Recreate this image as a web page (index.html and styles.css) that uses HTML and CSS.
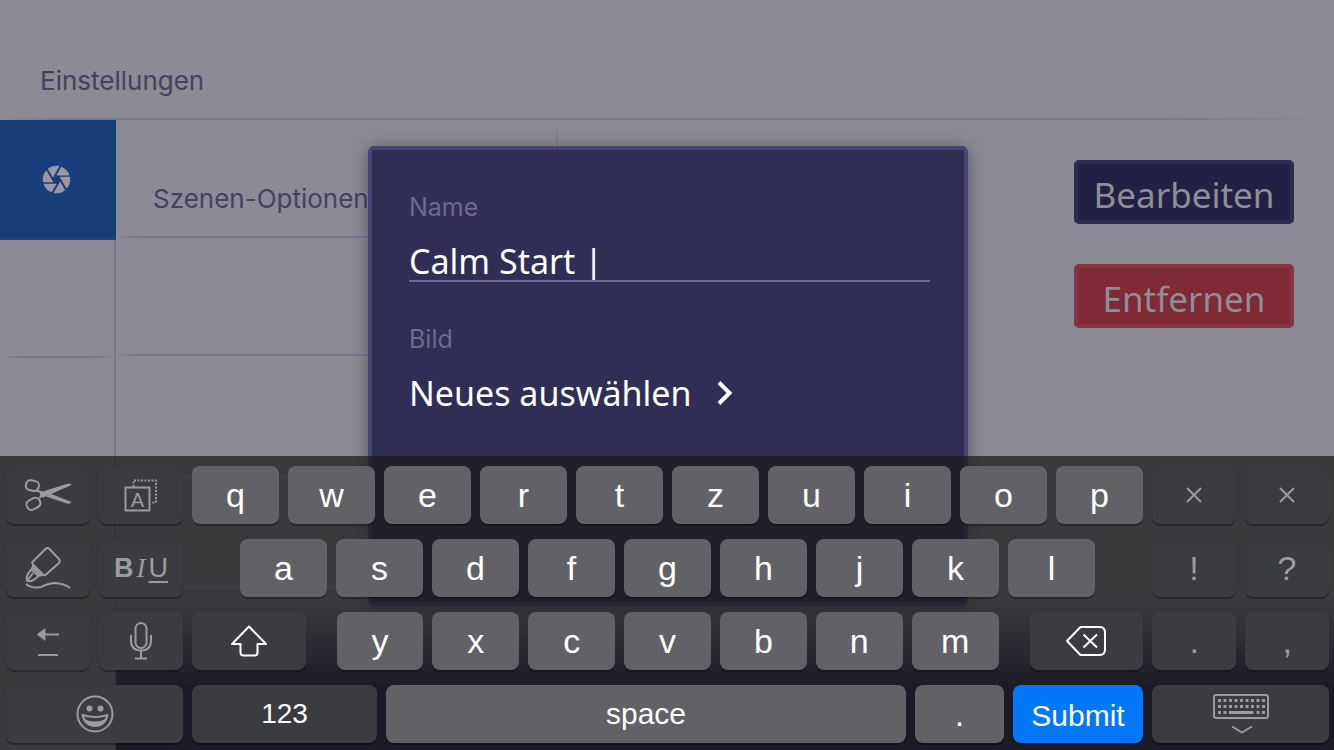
FILE: index.html
```html
<!DOCTYPE html>
<html lang="de">
<head>
<meta charset="utf-8">
<meta name="viewport" content="width=device-width, initial-scale=1">
<title>Einstellungen</title>
<link rel="stylesheet" href="styles.css">
</head>
<body>
<div class="screen">
  <header class="header"><h1 class="title">Einstellungen</h1></header>
  <main class="body">
    <nav class="sidebar" aria-label="Bereiche">
      <a class="tab tab-active" href="#szenen" aria-label="Szenen">
        <svg class="aperture" viewBox="0 0 24 24" aria-hidden="true"><path d="M9.4 10.5l4.77-8.26C13.47 2.09 12.75 2 12 2c-2.4 0-4.6.85-6.32 2.25l3.66 6.35.06-.1zM21.54 9c-.92-2.92-3.15-5.26-6-6.34L11.88 9h9.66zm.26 1h-7.49l.29.5 4.76 8.25C21 16.97 22 14.61 22 12c0-.69-.07-1.35-.2-2zM8.54 12l-3.9-6.75C3.01 7.03 2 9.39 2 12c0 .69.07 1.35.2 2h7.49l-1.15-2zm-6.08 3c.92 2.92 3.15 5.26 6 6.34L12.12 15H2.46zm11.27 0l-3.9 6.76c.7.15 1.42.24 2.17.24 2.4 0 4.6-.85 6.32-2.25l-3.66-6.35-.93 1.6z"/></svg>
      </a>
      <div class="tab"></div>
      <div class="tab"></div>
    </nav>
    <section class="list">
      <h2 class="row row-title">Szenen-Optionen</h2>
      <div class="row"></div>
      <div class="row"></div>
      <div class="row"></div>
    </section>
    <section class="actions">
      <button class="action action-edit" type="button">Bearbeiten</button>
      <button class="action action-remove" type="button">Entfernen</button>
    </section>
  </main>

  <form class="dialog" role="dialog" aria-label="Szene bearbeiten">
    <label class="label" for="name">Name</label>
    <input class="name-input" id="name" type="text" value="Calm Start |">
    <span class="label" id="bild">Bild</span>
    <button class="picker" type="button" aria-describedby="bild">Neues auswählen
      <svg class="chevron" viewBox="0 0 16 26" aria-hidden="true"><path d="M2 2.500L12.500 13L2 23.500"/></svg>
    </button>
  </form>

  <div class="keyboard" role="group" aria-label="Tastatur">
    <div class="keys">
      <button class="key dark side" type="button" aria-label="Ausschneiden">
        <svg class="ico" width="48" height="32" viewBox="0 0 48 32" aria-hidden="true"><g class="line"><rect x="2" y="1.500" width="13" height="10" rx="4.500" transform="rotate(12 8 6)"/><rect x="2.500" y="20" width="14" height="10" rx="4.500" transform="rotate(-28 9 25)"/><path d="M12 11.500l7 2M15 19l3-2"/></g><path class="solid" d="M16 13.500L44 4.500Q47 4 47.500 6L19 18.500L16 17zM22 17.500L27 15L47.500 23Q46 25.500 43 24.500z"/></svg>
      </button>
      <button class="key dark side" type="button" aria-label="Alles auswählen">
        <svg class="ico" width="34" height="34" viewBox="0 0 34 34" aria-hidden="true"><g class="line"><rect x="1.500" y="9.500" width="24" height="23"/><path stroke-dasharray="2 1.500" d="M9.500 9V2.500H32V24.500H27"/></g><text class="ico-text" x="13.500" y="28.500">A</text></svg>
      </button>
      <button class="key" type="button">q</button><button class="key" type="button">w</button><button class="key" type="button">e</button><button class="key" type="button">r</button><button class="key" type="button">t</button><button class="key" type="button">z</button><button class="key" type="button">u</button><button class="key" type="button">i</button><button class="key" type="button">o</button><button class="key" type="button">p</button>
      <button class="key dark side" type="button" aria-label="Leer"><svg class="ico" width="16" height="16" viewBox="0 0 16 16" aria-hidden="true"><path class="line" d="M1 1l14 14M15 1L1 15"/></svg></button>
      <button class="key dark side" type="button" aria-label="Leer"><svg class="ico" width="16" height="16" viewBox="0 0 16 16" aria-hidden="true"><path class="line" d="M1 1l14 14M15 1L1 15"/></svg></button>
    </div>
    <div class="keys">
      <button class="key dark side" type="button" aria-label="Markieren">
        <svg class="ico" width="46" height="44" viewBox="0 0 46 44" aria-hidden="true"><g class="line"><path d="M8 18.500Q6.500 17 8 15.500L20.500 3Q22.500 1 24.500 3L34 13Q35.500 15 34 17L21 28.500Q19.500 30 18 28.500zM8.500 18.500L6.500 23.500L13.500 30L18 28.500M7.500 21L16 29.500"/><path d="M6.500 23.500Q0 30 2 35Q7 36.500 13.500 30M2 35L8 27M1 38Q7 43 16 41Q24 37 31 37Q40 38 45 42"/></g></svg>
      </button>
      <button class="key dark side biu" type="button"><b>B</b><i>I</i><u>U</u></button>
      <span class="inset-wide"></span>
      <button class="key" type="button">a</button><button class="key" type="button">s</button><button class="key" type="button">d</button><button class="key" type="button">f</button><button class="key" type="button">g</button><button class="key" type="button">h</button><button class="key" type="button">j</button><button class="key" type="button">k</button><button class="key" type="button">l</button>
      <span class="inset-wide"></span>
      <button class="key dark side" type="button">!</button>
      <button class="key dark side" type="button">?</button>
    </div>
    <div class="keys">
      <button class="key dark side" type="button" aria-label="Tabulator zurück">
        <svg class="ico" width="32" height="30" viewBox="0 0 32 30" aria-hidden="true"><path class="line" d="M8 8.500H27M6 29H26"/><path class="solid" d="M4.500 8.500L13.500 2V15z"/></svg>
      </button>
      <button class="key dark side" type="button" aria-label="Diktieren">
        <svg class="ico" width="24" height="38" viewBox="0 0 24 38" aria-hidden="true"><g class="line"><rect x="6.500" y="1" width="11" height="25" rx="5.500"/><path d="M2 13V18.500Q2 28.500 12 28.500T22 18.500V13M12 28.500V36.500M6 36.500H18"/></g></svg>
      </button>
      <button class="key dark shift" type="button" aria-label="Umschalt">
        <svg class="ico bright" width="38" height="32" viewBox="0 0 38 32" aria-hidden="true"><path class="line" d="M19 1.500L36 19H27.500V27.500Q27.500 30.500 24.500 30.500H13.500Q10.500 30.500 10.500 27.500V19H2z"/></svg>
      </button>
      <span class="inset-narrow"></span>
      <button class="key" type="button">y</button><button class="key" type="button">x</button><button class="key" type="button">c</button><button class="key" type="button">v</button><button class="key" type="button">b</button><button class="key" type="button">n</button><button class="key" type="button">m</button>
      <span class="inset-narrow"></span>
      <button class="key dark shift" type="button" aria-label="Löschen">
        <svg class="ico bright" width="40" height="30" viewBox="0 0 40 30" aria-hidden="true"><path class="line" d="M14.500 1H33.500Q39 1 39 6.500V23.500Q39 29 33.500 29H14.500L1 15zM17.500 8.500L31 21.500M31 8.500L17.500 21.500"/></svg>
      </button>
      <button class="key dark side" type="button">.</button>
      <button class="key dark side" type="button">,</button>
    </div>
    <div class="keys">
      <button class="key dark double" type="button" aria-label="Emoji">
        <svg class="ico" width="38" height="38" viewBox="0 0 38 38" aria-hidden="true"><circle class="line" cx="19" cy="19" r="17.500"/><circle class="solid" cx="13.500" cy="13.500" r="3"/><circle class="solid" cx="24.500" cy="13.500" r="3"/><path class="line" d="M6.500 20Q19 24 31.500 20Q29 31 19 31T6.500 20z"/><path class="solid" d="M8 24Q19 29 30 24Q26.500 31 19 31T8 24z"/></svg>
      </button>
      <button class="key dark double numbers" type="button">123</button>
      <button class="key space" type="button">space</button>
      <button class="key period" type="button">.</button>
      <button class="key submit" type="submit">Submit</button>
      <button class="key dark double hide" type="button" aria-label="Tastatur ausblenden">
        <svg class="ico" width="56" height="40" viewBox="0 0 56 40" aria-hidden="true"><rect class="line" x="1" y="1" width="54" height="23" rx="2"/><path class="keydots" d="M5 6.500h47M5 12.500h47M5 18.500h9M43.500 18.500h9"/><path class="solid" d="M16 17h24.500v3H16z"/><path class="line" d="M19 32.500l10 6 10-6"/></svg>
      </button>
    </div>
  </div>
</div>
</body>
</html>
```
FILE: styles.css
```css
* { box-sizing: border-box; }

body {
  margin: 0;
  background: #8b8a95;
  color: #434260;
  font-family: Inter, "Liberation Sans", sans-serif;
}

button, input { font: inherit; border: 0; margin: 0; padding: 0; }

.screen {
  position: relative;
  display: flex;
  flex-direction: column;
  min-height: 100vh;
  overflow: hidden;
}

.header {
  padding: 64px 40px 20px;
  border-bottom: 2px solid;
  border-image: linear-gradient(90deg, transparent, #79778a 6%, #79778a 84%, transparent) 1;
}

.title, .row-title {
  margin: 0;
  font-size: 26px;
  font-weight: 400;
  line-height: 34px;
}

.body { flex: 1; display: flex; }

.sidebar { width: 116px; border-right: 2px solid #79778a; background: #8b8a95; }

.tab {
  display: flex;
  align-items: center;
  justify-content: center;
  height: 118px;
  border-bottom: 2px solid;
  border-image: linear-gradient(90deg, transparent, #79778a 20%, #79778a 80%, transparent) 1;
}

.tab-active {
  height: 120px;
  margin-right: -2px;
  padding-right: 4px;
  border-image: none;
  border-color: #27427a;
  background: #173d7b;
}

.aperture { width: 33px; height: 33px; fill: #9a99a3; }

.list {
  width: 442px;
  border-right: 2px solid;
  border-image: linear-gradient(transparent, #79778a 6%, #79778a 70%, transparent 76%) 1;
}

.row {
  height: 118px;
  border-bottom: 2px solid;
  border-image: linear-gradient(90deg, transparent, #79778a 5%) 1;
}

.row-title { padding: 62px 0 0 37px; }

.list, .actions { background: linear-gradient(transparent 76%, #222248 90%); }

.actions {
  flex: 1;
  display: flex;
  flex-direction: column;
  align-items: flex-end;
  gap: 40px;
  padding: 40px;
}

.action {
  width: 220px;
  height: 64px;
  padding-top: 5px;
  border: 4px solid;
  border-radius: 5px;
  color: #8e8d99;
  font-family: "Noto Sans", sans-serif;
  font-size: 35px;
  line-height: 50px;
}

.action-edit { background: #222143; border-color: #2d2c50; }
.action-remove { background: #802a35; border-color: #863440; }

.dialog {
  position: absolute;
  top: 146px;
  left: 50%;
  width: 600px;
  height: 460px;
  margin-left: -299px;
  padding: 40px 34px 40px 37px;
  display: flex;
  flex-direction: column;
  align-items: stretch;
  border: 4px solid #464475;
  border-radius: 6px;
  background: #302e55;
  box-shadow: 0 2px 18px rgba(0, 0, 0, .35);
}

.label { font-size: 25px; line-height: 34px; color: #6c6a8f; }

.name-input, .picker {
  color: #fff;
  background: none;
  font-family: "Noto Sans", sans-serif;
  font-size: 34px;
  line-height: 46px;
}

.name-input {
  height: 58px;
  margin-bottom: 40px;
  padding-top: 18px;
  border-bottom: 2px solid #6d6a95;
  border-radius: 0;
  outline: 0;
}

.picker {
  display: flex;
  align-items: center;
  gap: 26px;
  padding-top: 14px;
}

.chevron { width: 16px; height: 26px; fill: none; stroke: #fff; stroke-width: 4; }

.keyboard {
  position: absolute;
  right: 0;
  bottom: 0;
  left: 0;
  display: flex;
  flex-direction: column;
  gap: 15px;
  padding: 10px 5px 7px 6px;
  background: rgba(25, 25, 26, .71);
}

.keys { display: flex; gap: 9px; }

.key {
  flex: 87 1 0;
  min-width: 0;
  height: 58px;
  display: flex;
  align-items: center;
  justify-content: center;
  border-radius: 8px;
  background: #626166;
  box-shadow: 0 2px 0 rgba(0, 0, 0, .3);
  color: #fff;
  font-family: "Liberation Sans", Arial, sans-serif;
  font-size: 34px;
  line-height: 58px;
}

.dark { background: #3b3c40; color: #9c9c9f; }
.side { flex-grow: 84; }
.inset-wide { flex: 39 1 0; }
.inset-narrow { flex: 13 1 0; }
.shift { flex-grow: 114; }
.double { flex-grow: 177; }
.space { flex-grow: 520; font-size: 30px; }
.period { flex-grow: 89; }
.numbers { flex-grow: 185; color: #fff; font-size: 28px; }
.submit { flex-grow: 130; padding-top: 3px; font-size: 30px; background: #0278f8; }

.biu { gap: 3px; font-size: 27px; }
.biu i { font-family: "Liberation Serif", serif; }
.biu u { text-decoration-thickness: 2px; text-underline-offset: 4px; }

.ico { flex: none; overflow: visible; color: #9c9c9f; }
.bright { color: #fff; }
.line { fill: none; stroke: currentColor; stroke-width: 2; stroke-linejoin: round; }
.solid { fill: currentColor; }
.keydots { fill: none; stroke: currentColor; stroke-width: 3; stroke-dasharray: 3 2.5; }
.ico-text { fill: currentColor; font-size: 20px; text-anchor: middle; }
```
